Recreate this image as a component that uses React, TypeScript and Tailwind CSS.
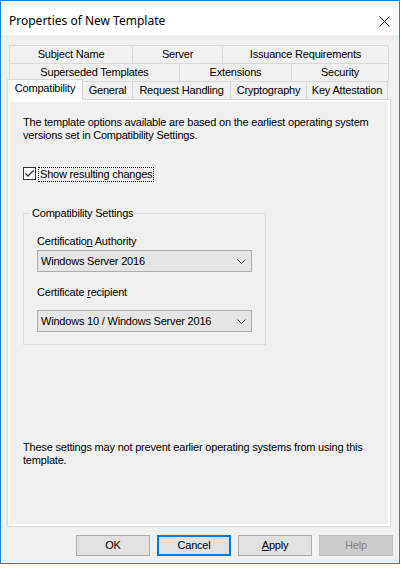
import React from "react";

const tabBorder = "border-[#d9d9d9]";

function Chevron() {
  return (
    <svg width="9" height="5" viewBox="0 0 9 5" className="shrink-0">
      <polyline points="0.5,0.5 4.5,4.5 8.5,0.5" fill="none" stroke="#404040" strokeWidth="1" />
    </svg>
  );
}

function Select({ value }: { value: string }) {
  return (
    <div className="flex h-[22px] w-[215px] items-center justify-between border border-[#adadad] bg-[#e5e5e5] pl-[3px] pr-[5px] leading-[13px]">
      <span>{value}</span>
      <Chevron />
    </div>
  );
}

function Button({
  children,
  isDefault,
  disabled,
}: {
  children: React.ReactNode;
  isDefault?: boolean;
  disabled?: boolean;
}) {
  return (
    <div
      className={
        "flex h-[21px] w-[74px] items-center justify-center leading-[13px] " +
        (disabled
          ? "border border-[#bfbfbf] bg-[#cccccc] text-[#838383]"
          : isDefault
          ? "border-2 border-[#0078d7] bg-[#e1e1e1]"
          : "border border-[#adadad] bg-[#e1e1e1]")
      }
    >
      {children}
    </div>
  );
}

function TabRow({ tabs }: { tabs: [string, number][] }) {
  return (
    <div className="ml-[8px] flex h-[18px]">
      {tabs.map(([label, w], i) => (
        <div
          key={label}
          style={{ width: w }}
          className={
            "flex items-center justify-center border-t border-r leading-[13px] " +
            tabBorder +
            (i === 0 ? " border-l" : "")
          }
        >
          {label}
        </div>
      ))}
    </div>
  );
}

export default function App() {
  return (
    <div className="h-[568px] w-[403px] bg-white font-['Liberation_Sans',Arial,sans-serif] text-[11px] tracking-[-0.2px] text-black">
      <div className="flex h-[564px] w-[400px] flex-col border border-[#1883d7]">
        {/* title bar */}
        <div className="flex h-[34px] shrink-0 items-center justify-between bg-white pt-[6px] pl-[8px] pr-[9px]">
          <span className="font-['Noto_Sans',sans-serif] text-[12px] leading-[16px] tracking-normal">
            Properties of New Template
          </span>
          <svg width="11" height="11" viewBox="0 0 11 11">
            <path d="M0.5 0.5 L10.5 10.5 M10.5 0.5 L0.5 10.5" stroke="#000" strokeWidth="1" />
          </svg>
        </div>

        <div className="flex flex-1 flex-col bg-[#f0f0f0] pt-[10px]">
          <TabRow
            tabs={[
              ["Subject Name", 124],
              ["Server", 90],
              ["Issuance Requirements", 166],
            ]}
          />
          <TabRow
            tabs={[
              ["Superseded Templates", 171],
              ["Extensions", 112],
              ["Security", 97],
            ]}
          />
          <div className="ml-[6px] flex h-[18px] items-end">
            <div
              className={
                "relative z-10 -mb-[1px] flex h-[21px] w-[76px] justify-center border-t border-r border-l bg-white pt-[2px] leading-[13px] " +
                tabBorder
              }
            >
              Compatibility
            </div>
            {(
              [
                ["General", 50],
                ["Request Handling", 98],
                ["Cryptography", 76],
                ["Key Attestation", 81],
              ] as [string, number][]
            ).map(([label, w]) => (
              <div
                key={label}
                style={{ width: w }}
                className={"flex h-[18px] items-center justify-center border-t border-r leading-[13px] " + tabBorder}
              >
                {label}
              </div>
            ))}
          </div>

          {/* tab page */}
          <div className={"ml-[6px] flex h-[428px] w-[384px] flex-col border bg-white p-[2px] " + tabBorder}>
            <div className="flex flex-1 flex-col bg-[#f0f0f0] pt-[14px] pl-[13px] leading-[13px]">
              <p>
                The template options available are based on the earliest operating system
                <br />
                versions set in Compatibility Settings.
              </p>

              <div className="mt-[25px] flex items-start">
                <div className="flex h-[13px] w-[13px] items-center justify-center border border-[#333333] bg-white">
                  <svg width="11" height="11" viewBox="0 0 11 11">
                    <polyline points="1.5,5.5 4,8 9.5,2.5" fill="none" stroke="#333333" strokeWidth="1.3" />
                  </svg>
                </div>
                <span className="ml-[2px] border border-dotted border-black px-[1px]">Show resulting changes</span>
              </div>

              <fieldset className="mt-[25px] w-[241px] border border-[#dcdcdc] px-[13px] pb-[12px]">
                <legend className="ml-[-7px] px-[2px] leading-[13px]">Compatibility Settings</legend>
                <div className="mt-[15px]">
                  Certificatio<span className="underline">n</span> Authority
                </div>
                <div className="mt-[2px]">
                  <Select value="Windows Server 2016" />
                </div>
                <div className="mt-[14px]">
                  Certificate <span className="underline">r</span>ecipient
                </div>
                <div className="mt-[11px]">
                  <Select value="Windows 10 / Windows Server 2016" />
                </div>
              </fieldset>

              <p className="mt-auto pb-[57px]">
                These settings may not prevent earlier operating systems from using this
                <br />
                template.
              </p>
            </div>
          </div>

          {/* buttons */}
          <div className="mt-[8px] flex justify-end gap-[7px] pr-[6px]">
            <Button>OK</Button>
            <Button isDefault>Cancel</Button>
            <Button>
              <span className="underline">A</span>pply
            </Button>
            <Button disabled>Help</Button>
          </div>
        </div>
      </div>
    </div>
  );
}
